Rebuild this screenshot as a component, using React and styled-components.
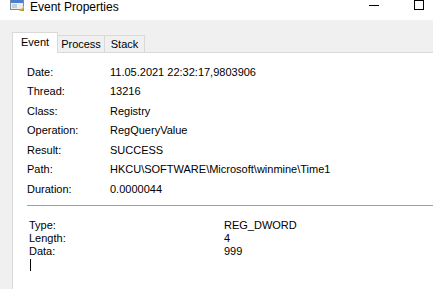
import { Fragment } from "react";
import styled, { createGlobalStyle } from "styled-components";

const GlobalStyle = createGlobalStyle`
  html, body {
    margin: 0;
    padding: 0;
    background: #f0f0f0;
  }
  body {
    font-family: "Liberation Sans", Arial, sans-serif;
    font-size: 11px;
    color: #000;
  }
`;

const Window = styled.div`
  width: 433px;
  height: 289px;
  overflow: hidden;
  background: #f0f0f0;
  display: flex;
  flex-direction: column;
`;

const TitleBar = styled.div`
  height: 20px;
  flex: none;
  background: #fff;
  display: flex;
  align-items: flex-start;
`;

const AppIcon = styled.svg`
  flex: none;
  margin-left: 9px;
  margin-top: -4px;
`;

const Title = styled.span`
  margin-left: 5px;
  font-size: 12px;
  line-height: 15px;
`;

const Controls = styled.div`
  margin-left: auto;
  display: flex;
  align-items: flex-start;
  gap: 35px;
  padding-right: 9px;
`;

const MinGlyph = styled.div`
  width: 10px;
  height: 1px;
  margin-top: 5px;
  background: #000;
`;

const MaxGlyph = styled.div`
  width: 8px;
  height: 8px;
  border: 1px solid #000;
`;

const Body = styled.div`
  flex: 1;
  min-height: 0;
  display: flex;
  flex-direction: column;
  padding: 12px 0 0 12px;
`;

const TabStrip = styled.div`
  display: flex;
  align-items: flex-end;
  height: 20px;
  flex: none;
  position: relative;
  z-index: 1;
`;

const Tab = styled.div`
  box-sizing: border-box;
  width: ${(p) => p.$w}px;
  height: ${(p) => (p.$active ? 21 : 17)}px;
  margin-bottom: ${(p) => (p.$active ? -1 : 0)}px;
  background: ${(p) => (p.$active ? "#fff" : "#f0f0f0")};
  border: 1px solid #d9d9d9;
  border-bottom: none;
  border-left: ${(p) => (p.$first ? "1px solid #d9d9d9" : "none")};
  display: flex;
  align-items: center;
  justify-content: center;
  font-size: 11px;
  padding-bottom: ${(p) => (p.$active ? 3 : 0)}px;
`;

const Panel = styled.div`
  flex: 1;
  background: #fff;
  border: 1px solid #d9d9d9;
  margin-right: -10px;
  margin-bottom: -10px;
  padding-top: 9px;
`;

const Props = styled.div`
  display: grid;
  grid-template-columns: 83px 1fr;
  grid-auto-rows: 19.5px;
  align-items: center;
  padding-left: 14px;
`;

const Separator = styled.div`
  height: 1px;
  background: #a0a0a0;
  margin: 6px 0 0 14px;
`;

const Detail = styled.div`
  display: grid;
  grid-template-columns: 195px 1fr;
  grid-auto-rows: 13px;
  align-items: center;
  padding: 13px 0 0 16px;
`;

const Caret = styled.div`
  width: 1px;
  height: 12px;
  background: #000;
  margin: 1px 0 0 17px;
`;

const props = [
  ["Date:", "11.05.2021 22:32:17,9803906"],
  ["Thread:", "13216"],
  ["Class:", "Registry"],
  ["Operation:", "RegQueryValue"],
  ["Result:", "SUCCESS"],
  ["Path:", "HKCU\\SOFTWARE\\Microsoft\\winmine\\Time1"],
  ["Duration:", "0.0000044"],
];

const details = [
  ["Type:", "REG_DWORD"],
  ["Length:", "4"],
  ["Data:", "999"],
];

export default function App() {
  return (
    <>
      <GlobalStyle />
      <Window>
        <TitleBar>
          <AppIcon width="16" height="16" viewBox="0 0 16 16">
            <rect x="1.5" y="3.5" width="13" height="10" fill="#eeeeee" stroke="#7d8aa3" />
            <rect x="2" y="4" width="12" height="3" fill="#4a7fd0" />
            <rect x="3" y="8" width="5" height="4" fill="#c4ccd9" />
            <path d="M10 15 L15 10 L15 15 Z" fill="#e8b040" />
            <path d="M12 15 L15 12 L15 15 Z" fill="#6ab04c" />
          </AppIcon>
          <Title>Event Properties</Title>
          <Controls>
            <MinGlyph />
            <MaxGlyph />
          </Controls>
        </TitleBar>
        <Body>
          <TabStrip>
            <Tab $active $first $w={46}>Event</Tab>
            <Tab $w={47}>Process</Tab>
            <Tab $w={40}>Stack</Tab>
          </TabStrip>
          <Panel>
            <Props>
              {props.map(([k, v]) => (
                <Fragment key={k}>
                  <span>{k}</span>
                  <span>{v}</span>
                </Fragment>
              ))}
            </Props>
            <Separator />
            <Detail>
              {details.map(([k, v]) => (
                <Fragment key={k}>
                  <span>{k}</span>
                  <span>{v}</span>
                </Fragment>
              ))}
            </Detail>
            <Caret />
          </Panel>
        </Body>
      </Window>
    </>
  );
}
